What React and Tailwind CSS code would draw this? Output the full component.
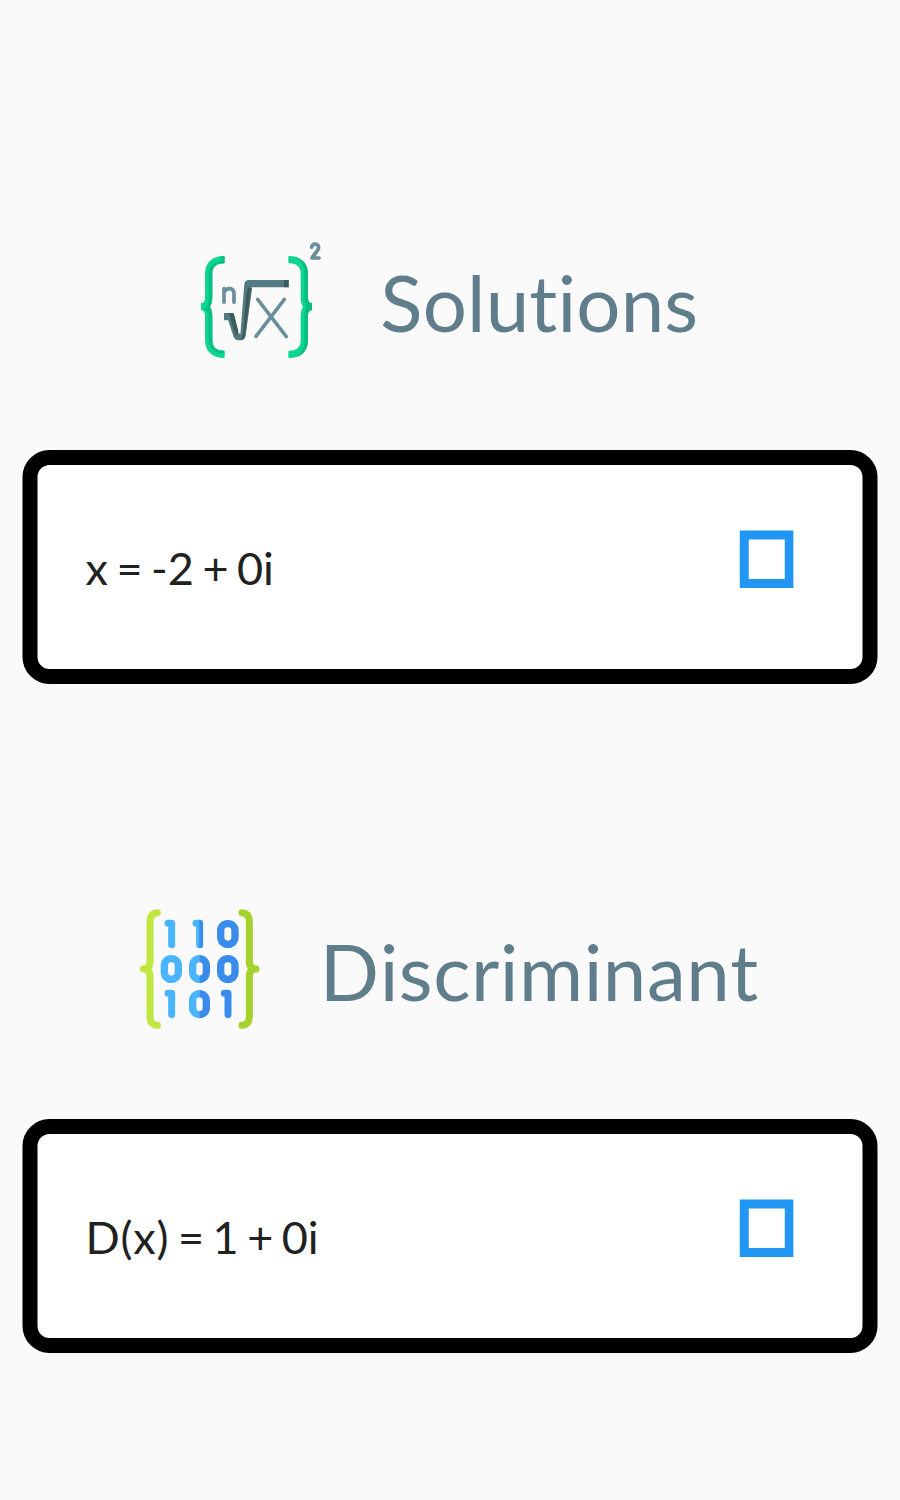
function RootIcon() {
  return (
    <svg className="size-[120px] shrink-0 overflow-visible" viewBox="30 15 360 360" fill="none" aria-hidden="true">
      {/* left brace */}
      <path d="M101 63Q104 63 104 66V82Q104 85 101 85C82 85 67 94 67 115V186C67 199 64 209 60 215C64 223 67 232 67 244V317C67 338 83 347 101 347Q104 347 104 350V366Q104 369 101 369C70 369 45 351 45 316V244C45 234 43 226 33 226V205C43 205 45 196 45 187V116C45 81 70 63 101 63Z" fill="#0FD592" />
      <path d="M103 78V82Q103 85 101 85C82 85 67 94 67 115V186C67 199 64 209 60 215C64 223 67 232 67 244V317C67 338 83 347 103 347V356C78 356 56 345 56 316V244C56 234 52 226 42 226L42 220C53 218 51 212 55 203C57 197 56 192 56 187V116C56 92 76 78 103 78Z" fill="#05C083" />
      <path d="M92 64L101 63Q104 63 104 66V82Q104 85 101 85L93 86Z" fill="#05B67B" opacity=".6" />
      {/* right brace */}
      <path d="M298 63Q295 63 295 66V82Q295 85 298 85C317 85 332 94 332 115V186C332 199 335 209 339 215C335 223 332 232 332 244V317C332 338 316 347 298 347Q295 347 295 350V366Q295 369 298 369C329 369 354 351 354 316V244C354 234 356 226 366 226V205C356 205 354 196 354 187V116C354 81 329 63 298 63Z" fill="#0FD592" />
      <path d="M315 66C340 73 354 91 354 116V187C354 196 356 205 366 205V226C356 226 354 234 354 244V316C354 343 340 360 317 367C335 356 343 341 343 316V244C343 230 348 222 348 215C348 208 343 201 343 187V116C343 93 334 76 315 66Z" fill="#05BE80" />
      {/* radical */}
      <path d="M102 234H131L144 292L151 298L163 147Q165 135 177 135H296V157H184L166 300Q164 315 153 315H144Q135 315 131 305L115 255H102Z" fill="#537982" />
      <path d="M117 234H127Q131 234 133 242L145 289L139 305L122 254ZM176 157L186 159L167 298Q165 315 153 315H147Q157 312 159 298L170 168ZM282 135H296V157H282Z" fill="#3E5959" />
      <path d="M102 255H115L132 305Q135 315 145 315H153Q164 315 166 300L184 158" stroke="#568C84" strokeWidth="1.5" />
      {/* index, radicand and exponent */}
      <g stroke="#688F9B" strokeLinecap="round" strokeLinejoin="round">
        <path d="M102 161V202M102 174Q106 161 119 161Q132 161 132 178V202" strokeWidth="11" />
        <path d="M203 193L289 305M283 193L198 304" strokeWidth="10.5" />
        <path d="M365 37C365 24 386 24 386 37C386 48 374 54 366 69H387" strokeWidth="11" />
      </g>
    </svg>
  );
}

function MatrixIcon() {
  return (
    <svg className="size-[120px] shrink-0 overflow-visible" viewBox="30 27 360 360" fill="none" aria-hidden="true">
      <g strokeLinecap="round" strokeLinejoin="round">
        <path d="M82 38Q60 40 60 64V184Q60 207 40 207Q60 207 60 230V350Q60 374 82 376" stroke="#C0E640" strokeWidth="21" />
        <path d="M336 38Q358 40 358 64V184Q358 207 378 207Q358 207 358 230V350Q358 374 336 376" stroke="#A5D22D" strokeWidth="21" />
        {/* ones */}
        <g stroke="#49B4FF" strokeWidth="21">
          <path d="M114 70H125V134M198 70H209V134M114 280H125V344" />
        </g>
        <path d="M283 280H294V344" stroke="#398CEC" strokeWidth="21" />
      </g>
      <path d="M208 59Q219 59 219 70V134Q219 144 208 144Z" fill="#398CEC" />
      {/* zeros */}
      <g stroke="#49B4FF" strokeWidth="22">
        <rect x="103" y="176" width="42" height="62" rx="21" />
        <path d="M209 176A21 21 0 0 0 188 197V217A21 21 0 0 0 209 238" />
        <path d="M209 281A21 21 0 0 0 188 302V323A21 21 0 0 0 209 344" />
      </g>
      <g stroke="#398CEC" strokeWidth="22">
        <rect x="272" y="71" width="43" height="62" rx="21" />
        <rect x="272" y="176" width="43" height="62" rx="21" />
        <path d="M208 176A21 21 0 0 1 229 197V217A21 21 0 0 1 208 238" />
        <path d="M208 281A21 21 0 0 1 229 302V323A21 21 0 0 1 208 344" />
      </g>
    </svg>
  );
}

function CopyBox() {
  return (
    <svg className="h-[58px] w-[55px] shrink-0" viewBox="0 0 55 58" fill="none" aria-hidden="true">
      <rect x="5.75" y="5" width="45" height="48.5" stroke="#2196F3" strokeWidth="9" />
    </svg>
  );
}

function Section({ icon, title, titleClass, children }) {
  return (
    <section className="flex h-[669px] flex-col items-center">
      <header className="flex h-[120px] items-center gap-[60px]">
        {icon}
        <h1 className={`whitespace-nowrap pt-[4px] text-[78px] leading-[94px] text-[#607D8B] ${titleClass}`}>
          {title}
        </h1>
      </header>
      <div className="ml-[22px] mt-[90px] flex h-[234px] w-[855px] translate-x-[0.5px] items-start justify-between self-start rounded-[27px] border-[15px] border-black bg-white pl-[48px] pr-[69px]">
        <p className="mt-[76px] whitespace-nowrap text-[45px] leading-[54px] text-[#212121] [word-spacing:-3px]">
          {children}
        </p>
        <div className="mt-[65px] flex">
          <CopyBox />
        </div>
      </div>
    </section>
  );
}

export default function App() {
  return (
    <main className="h-[1500px] w-[900px] overflow-hidden bg-[#FAFAFA] pt-[240px] font-['Lato',sans-serif] [font-kerning:none] [font-variant-ligatures:none]">
      <Section icon={<RootIcon />} title="Solutions" titleClass="tracking-[0.15px] pr-[1.5px]">
        x = -2 + 0i
      </Section>
      <Section icon={<MatrixIcon />} title="Discriminant" titleClass="tracking-[0.5px] pr-[1.5px]">
        <span className="tracking-[0.8px]">D(x)</span> = 1 + 0i
      </Section>
    </main>
  );
}
